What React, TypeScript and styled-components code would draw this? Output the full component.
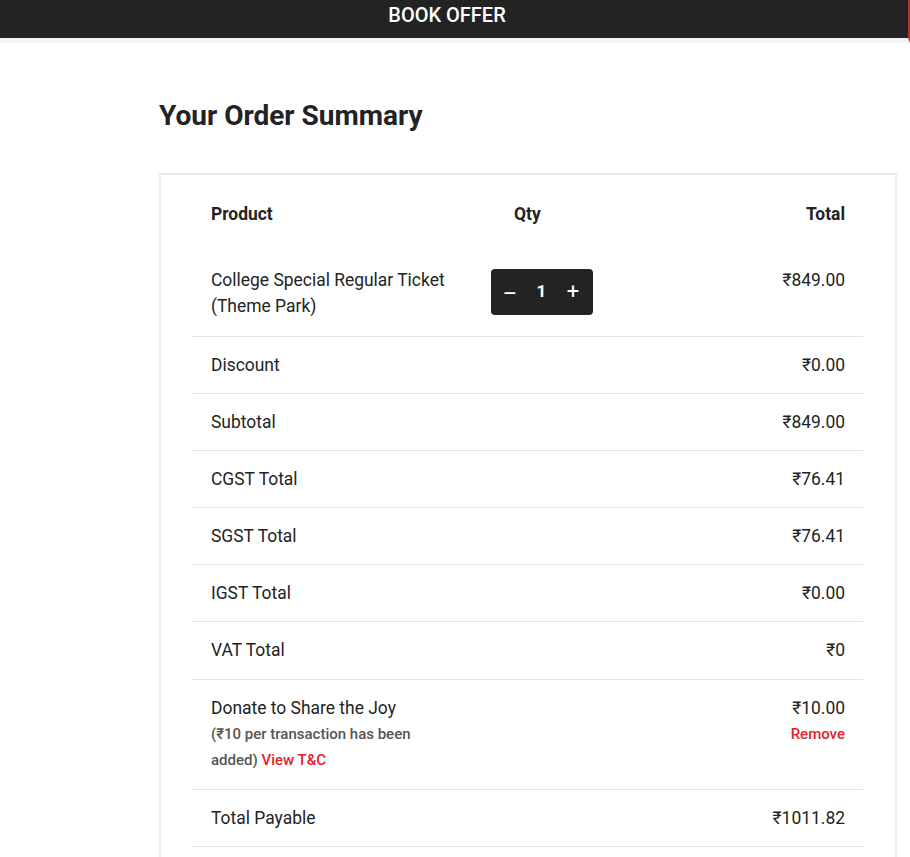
import React from "react";
import styled, { createGlobalStyle } from "styled-components";

const GlobalStyle = createGlobalStyle`
  html, body { margin: 0; padding: 0; background: #ffffff; }
  body { font-family: Roboto, "Noto Sans", "DejaVu Sans", sans-serif; color: #232323; }
  * { box-sizing: border-box; }
`;

const TopBar = styled.header`
  height: 43px;
  background: #232323;
  border-bottom: 5px solid #f2f2f2;
  border-right: 2px solid #b8322f;
  display: flex;
  justify-content: center;
  align-items: center;
  padding: 0 14px 9px 0;
`;

const BarTitle = styled.div`
  color: #ffffff;
  font-size: 20px;
  line-height: 24px;
  font-weight: 500;
`;

const Main = styled.main`
  padding: 0 0 0 159px;
  width: 897px;
`;

const Title = styled.h1`
  margin: 0;
  padding: 57px 0 0;
  font-size: 28px;
  line-height: 32px;
  font-weight: 700;
  color: #232323;
`;

const Card = styled.section`
  margin-top: 41px;
  border: 2px solid #ebebeb;
  border-bottom: none;
  padding: 26px 32px 40px 31px;
`;

const Row = styled.div<{ $head?: boolean; $top?: number; $bottom?: number }>`
  display: grid;
  grid-template-columns: 280px 1fr auto;
  align-items: start;
  padding: ${(p) => p.$top ?? 15}px 18px ${(p) => p.$bottom ?? 15}px 19px;
  border-bottom: ${(p) => (p.$head ? "none" : "1px solid #e4e4e4")};
  font-size: 17.45px;
  line-height: 1.5;
  font-weight: ${(p) => (p.$head ? 700 : 400)};
`;

const Label = styled.div``;

const QtyHead = styled.div`
  padding-left: 23px;
`;

const Amount = styled.div`
  text-align: right;
  grid-column: 3;
`;

const QtyBox = styled.div`
  width: 102px;
  height: 46px;
  margin-top: 2px;
  background: #232323;
  border-radius: 4px;
  display: flex;
  align-items: center;
  justify-content: space-between;
  padding: 0 10px 0 9px;
  color: #ffffff;
`;

const QtyButton = styled.button<{ $minus?: boolean }>`
  background: none;
  border: none;
  color: #ffffff;
  font-family: inherit;
  font-size: 22px;
  line-height: 22px;
  width: 20px;
  padding: ${(p) => (p.$minus ? "4px 0 0" : "0")};
  cursor: pointer;
`;

const QtyValue = styled.span`
  font-size: 17px;
  font-weight: 700;
`;

const Note = styled.div`
  font-size: 15px;
  line-height: 26px;
  color: #555555;
  font-weight: 500;
  max-width: 220px;
`;

const RedLink = styled.a`
  color: #e4202a;
  font-weight: 500;
  text-decoration: none;
  font-size: 15px;
  cursor: pointer;
`;

const RemoveLink = styled(RedLink)`
  display: block;
  line-height: 26px;
`;

const rows: [string, string][] = [
  ["Discount", "₹0.00"],
  ["Subtotal", "₹849.00"],
  ["CGST Total", "₹76.41"],
  ["SGST Total", "₹76.41"],
  ["IGST Total", "₹0.00"],
  ["VAT Total", "₹0"],
];

export default function App() {
  return (
    <>
      <GlobalStyle />
      <TopBar>
        <BarTitle>BOOK OFFER</BarTitle>
      </TopBar>
      <Main>
        <Title>Your Order Summary</Title>
        <Card>
          <Row $head $top={0} $bottom={0}>
            <Label>Product</Label>
            <QtyHead>Qty</QtyHead>
            <Amount>Total</Amount>
          </Row>
          <Row $top={40} $bottom={16}>
            <Label>
              College Special Regular Ticket
              <br />
              (Theme Park)
            </Label>
            <QtyBox>
              <QtyButton $minus>–</QtyButton>
              <QtyValue>1</QtyValue>
              <QtyButton>+</QtyButton>
            </QtyBox>
            <Amount>₹849.00</Amount>
          </Row>
          {rows.map(([l, v]) => (
            <Row key={l}>
              <Label>{l}</Label>
              <Amount>{v}</Amount>
            </Row>
          ))}
          <Row $bottom={16}>
            <Label>
              Donate to Share the Joy
              <Note>
                (₹10 per transaction has been added) <RedLink>View T&amp;C</RedLink>
              </Note>
            </Label>
            <Amount>
              ₹10.00
              <RemoveLink>Remove</RemoveLink>
            </Amount>
          </Row>
          <Row>
            <Label>Total Payable</Label>
            <Amount>₹1011.82</Amount>
          </Row>
        </Card>
      </Main>
    </>
  );
}
